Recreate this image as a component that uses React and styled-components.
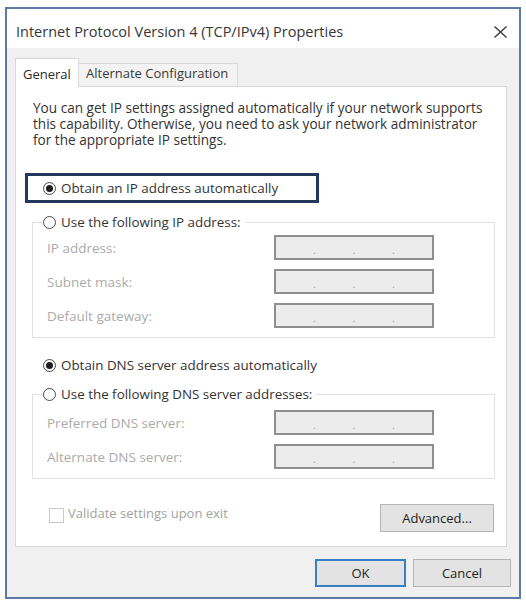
import React from "react";
import styled, { createGlobalStyle } from "styled-components";

const Global = createGlobalStyle`
  html, body { margin: 0; padding: 0; background: #ffffff; }
  body { font-family: "Open Sans", "Noto Sans", sans-serif; color: #2a2a2a; }
  * { box-sizing: border-box; }
`;

const Dialog = styled.div`
  margin: 7px 0 0 5px;
  width: 516px;
  height: 592px;
  border: 2px solid #5d7aa6;
  background: #f0f0f0;
  display: flex;
  flex-direction: column;
`;

const TitleBar = styled.div`
  height: 39px;
  background: #ffffff;
  display: flex;
  align-items: flex-start;
  padding: 14px 12px 0 9px;
`;

const Title = styled.div`
  font-size: 14.5px;
  line-height: 18px;
  color: #363636;
`;

const CloseBtn = styled.div`
  margin-left: auto;
  margin-top: 3px;
  width: 13px;
  height: 12px;
  display: flex;
`;

const TabArea = styled.div`
  padding: 10px 12px 0 8px;
`;

const TabStrip = styled.div`
  display: flex;
  align-items: flex-end;
  height: 28px;
`;

const Tab = styled.div`
  font-size: 13px;
  line-height: 18px;
  color: #2a2a2a;
  border: 1px solid #d9d9d9;
  white-space: nowrap;
  ${(p) =>
    p.$active
      ? `
    width: 64px;
    height: 29px;
    margin-bottom: -1px;
    background: #ffffff;
    border-bottom: none;
    padding: 6px 0 0 7px;
    position: relative;
    z-index: 1;
  `
      : `
    width: 159px;
    height: 23px;
    background: #f3f3f3;
    border-left: none;
    border-bottom: none;
    padding: 0 0 0 7px;
    color: #383838;
  `}
`;

const Panel = styled.div`
  height: 461px;
  background: #ffffff;
  border: 1px solid #d9d9d9;
  display: flex;
  flex-direction: column;
`;

const Desc = styled.p`
  margin: 13px 0 0 17px;
  font-size: 13.6px;
  line-height: 16px;
  color: #333;
`;

const Highlight = styled.div`
  margin: 25px 0 0 9px;
  width: 294px;
  height: 30px;
  border: 3px solid #21395c;
  display: flex;
  align-items: center;
  padding-left: 15px;
`;

const RadioRow = styled.label`
  display: flex;
  align-items: center;
  height: 18px;
  gap: 5px;
  font-size: 13.4px;
  color: #333;
  white-space: nowrap;
  margin: ${(p) => p.$margin || "0"};
`;

const RadioCircle = styled.span`
  width: 13px;
  height: 13px;
  border-radius: 50%;
  border: 1px solid #4a4a4a;
  background: #ffffff;
  display: flex;
  align-items: center;
  justify-content: center;
  flex: none;
  &::after {
    content: "";
    width: 7px;
    height: 7px;
    border-radius: 50%;
    background: ${(p) => (p.$checked ? "#1e1e1e" : "transparent")};
  }
`;

const Group = styled.fieldset`
  margin: ${(p) => p.$top}px 0 0 16px;
  width: 463px;
  border: 1px solid #e2e2e2;
  padding: ${(p) => p.$padTop}px 0 9px 14px;
  min-inline-size: 0;
`;

const Legend = styled.legend`
  margin-left: -4px;
  padding: 0 4px 0 0;
  background: #ffffff;
`;

const FieldGrid = styled.div`
  display: grid;
  grid-template-columns: 227px 160px;
  row-gap: 9px;
  align-items: center;
`;

const FieldLabel = styled.span`
  font-size: 13.5px;
  color: #ababab;
  white-space: nowrap;
`;

const IpBox = styled.div`
  width: 160px;
  height: 25px;
  border: 2px solid #8f8f8f;
  background: #ececec;
  display: flex;
  justify-content: space-evenly;
  align-items: center;
  padding-top: 3px;
`;

const Dot = styled.span`
  width: 2px;
  font-size: 11px;
  line-height: 1;
  color: #a5a5a5;
  display: flex;
  justify-content: center;
`;

const BottomRow = styled.div`
  margin: 25px 0 0 16px;
  width: 462px;
  padding-left: 17px;
  display: flex;
  align-items: flex-start;
`;

const CheckBox = styled.span`
  width: 15px;
  height: 15px;
  border: 1px solid #c9c9c9;
  background: #ffffff;
  margin-top: 4px;
  flex: none;
`;

const CheckLabel = styled.span`
  margin-left: 4px;
  font-size: 13px;
  line-height: 18px;
  color: #a2a2a2;
  white-space: nowrap;
`;

const Button = styled.button`
  font-family: inherit;
  font-size: 13px;
  color: #222;
  background: #e3e3e3;
  border: ${(p) => (p.$primary ? "2px solid #3a7fc3" : "1px solid #b4b4b4")};
  width: ${(p) => p.$w}px;
  height: 28px;
  padding: 0;
  margin-left: ${(p) => (p.$auto ? "auto" : "0")};
`;

const Footer = styled.div`
  display: flex;
  justify-content: flex-end;
  gap: 7px;
  padding: 12px 8px 0 0;
`;

const IpField = () => (
  <IpBox>
    <Dot>.</Dot>
    <Dot>.</Dot>
    <Dot>.</Dot>
  </IpBox>
);

export default function App() {
  return (
    <>
      <Global />
      <Dialog>
        <TitleBar>
          <Title>Internet Protocol Version 4 (TCP/IPv4) Properties</Title>
          <CloseBtn>
            <svg width="13" height="12" viewBox="0 0 13 12">
              <path d="M0.5 0.5 L12.5 11.5 M12.5 0.5 L0.5 11.5" stroke="#3a3a3a" strokeWidth="1.4" fill="none" />
            </svg>
          </CloseBtn>
        </TitleBar>
        <TabArea>
          <TabStrip>
            <Tab $active>General</Tab>
            <Tab>Alternate Configuration</Tab>
          </TabStrip>
          <Panel>
            <Desc>
              You can get IP settings assigned automatically if your network supports
              <br />
              this capability. Otherwise, you need to ask your network administrator
              <br />
              for the appropriate IP settings.
            </Desc>
            <Highlight>
              <RadioRow>
                <RadioCircle $checked />
                Obtain an IP address automatically
              </RadioRow>
            </Highlight>
            <Group $top={10} $padTop={4}>
              <Legend>
                <RadioRow>
                  <RadioCircle />
                  Use the following IP address:
                </RadioRow>
              </Legend>
              <FieldGrid>
                <FieldLabel>IP address:</FieldLabel>
                <IpField />
                <FieldLabel>Subnet mask:</FieldLabel>
                <IpField />
                <FieldLabel>Default gateway:</FieldLabel>
                <IpField />
              </FieldGrid>
            </Group>
            <RadioRow $margin="18px 0 0 27px">
              <RadioCircle $checked />
              Obtain DNS server address automatically
            </RadioRow>
            <Group $top={11} $padTop={7}>
              <Legend>
                <RadioRow>
                  <RadioCircle />
                  Use the following DNS server addresses:
                </RadioRow>
              </Legend>
              <FieldGrid>
                <FieldLabel>Preferred DNS server:</FieldLabel>
                <IpField />
                <FieldLabel>Alternate DNS server:</FieldLabel>
                <IpField />
              </FieldGrid>
            </Group>
            <BottomRow>
              <CheckBox />
              <CheckLabel>Validate settings upon exit</CheckLabel>
              <Button $w={114} $auto>
                Advanced...
              </Button>
            </BottomRow>
          </Panel>
        </TabArea>
        <Footer>
          <Button $w={91} $primary>
            OK
          </Button>
          <Button $w={98}>Cancel</Button>
        </Footer>
      </Dialog>
    </>
  );
}
